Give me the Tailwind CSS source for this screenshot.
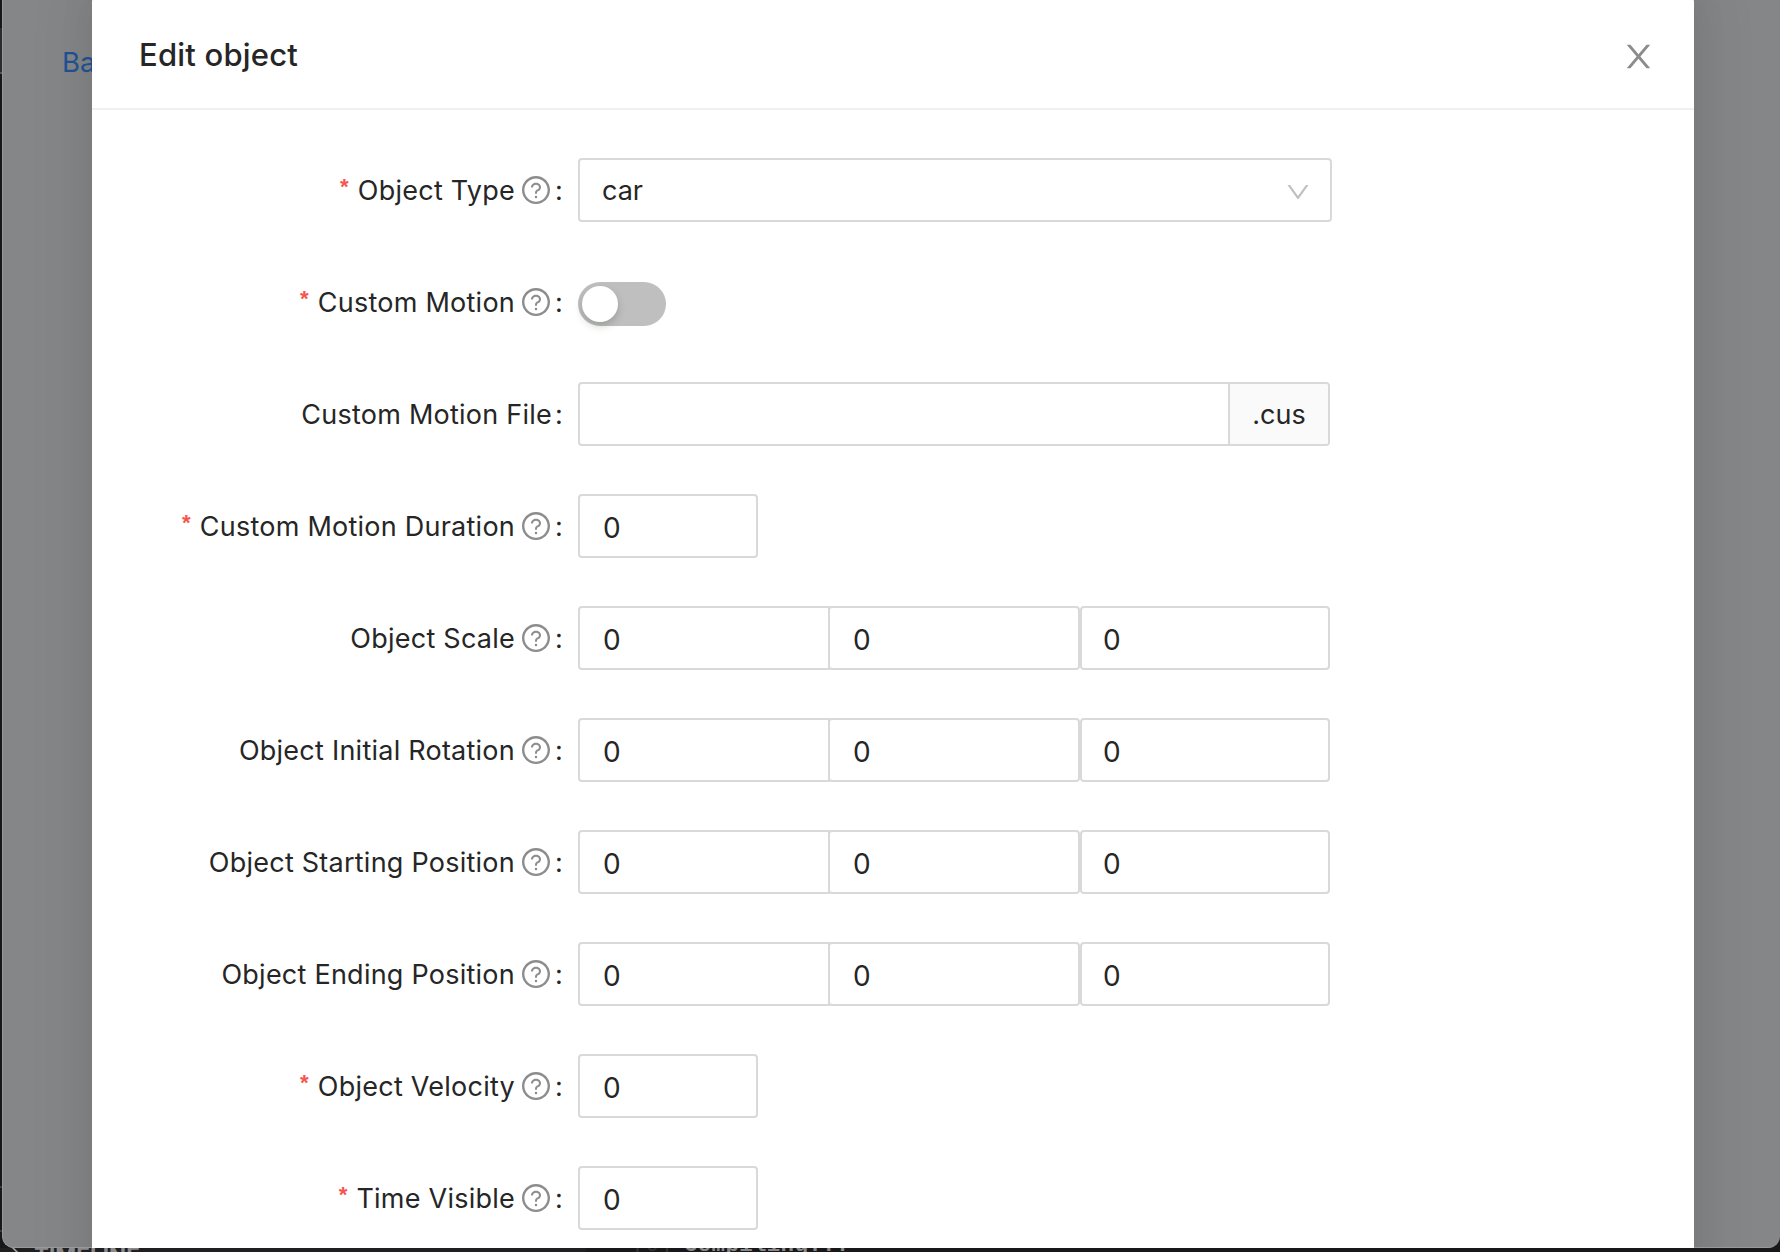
<!DOCTYPE html>
<html lang="en">
<head>
<meta charset="utf-8">
<title>Edit object</title>
<script src="https://cdn.jsdelivr.net/npm/@tailwindcss/browser@4"></script>
</head>
<body class="w-[1780px] h-[1252px] overflow-hidden bg-[#18181b] font-[Inter,sans-serif] text-[#262626] text-[27px]">
<svg class="hidden">
  <symbol id="help" viewBox="0 0 1024 1024"><path d="M512 64C264.6 64 64 264.6 64 512s200.6 448 448 448 448-200.6 448-448S759.4 64 512 64zm0 820c-205.4 0-372-166.6-372-372s166.6-372 372-372 372 166.6 372 372-166.6 372-372 372z"/><path d="M623.6 316.7C593.6 290.4 554 276 512 276s-81.6 14.5-111.6 40.7C369.2 344 352 380.7 352 420v7.6c0 4.4 3.6 8 8 8h48c4.4 0 8-3.6 8-8V420c0-44.1 43.1-80 96-80s96 35.9 96 80c0 31.1-22 59.6-56.1 72.7-21.2 8.1-39.2 22.3-52.1 40.9-13.1 19-19.9 41.8-19.9 64.9V620c0 4.4 3.6 8 8 8h48c4.4 0 8-3.6 8-8v-22.7a48.3 48.3 0 0130.9-44.8c59-22.7 97.1-74.7 97.1-132.5.1-39.3-17.1-76-48.3-103.3zM472 732a40 40 0 1080 0 40 40 0 10-80 0z"/></symbol>
</svg>
<div class="relative w-full h-full overflow-hidden">
  <!-- editor behind the window -->
  <div class="absolute left-0 top-[28px] w-[2px] h-[44px] bg-[#2b2c2f]"></div>
  <div class="absolute left-0 top-[72px] w-[2px] h-[2px] bg-[#55565a]"></div>
  <div class="absolute left-0 top-[1186px] w-[2px] h-[2px] bg-[#3c3c40]"></div>
  <div class="absolute left-0 top-[1230px] w-[2px] h-[2px] bg-[#3c3c40]"></div>
  <div class="absolute left-0 top-[1248px] w-[586px] h-1 bg-[#1f1f22]"></div>
  <div class="absolute left-[34px] top-[1244px] text-[22.5px] leading-[24px] font-bold text-[#8b8b8d] whitespace-nowrap">TIMELINE</div>
  <div class="absolute left-[632px] top-[1235px] font-[Liberation_Mono,monospace] text-[22.5px] leading-[20px] text-[#333] whitespace-nowrap">[0]</div>
  <div class="absolute left-[684px] top-[1235px] font-[Liberation_Mono,monospace] text-[22.5px] leading-[20px] tracking-[0.3px] font-bold text-[#888] whitespace-nowrap">Compiling...</div>
  <svg class="absolute left-[10px] top-[1243px] w-[10px] h-[12px]" viewBox="0 0 10 12" fill="none" stroke="#aaa" stroke-width="1.5"><path d="M1 3l7 7"/></svg>

  <!-- dimmed page -->
  <div class="absolute left-[2px] top-[-40px] w-[1778px] h-[1288px] rounded-b-[12px] bg-[#858687] overflow-hidden border-l border-b border-[#98999a]">
    <div class="absolute left-[59px] top-[85px] text-[27.5px] leading-[34px] text-[#1f5396]">Back</div>
    <div class="absolute left-[89px] top-[20px] w-[1602px] h-[1400px] shadow-[0_18px_56px_16px_rgba(0,0,0,0.05),0_12px_32px_rgba(0,0,0,0.08)]"></div>
  </div>

  <!-- dialog -->
  <div class="absolute left-[92px] top-[-2px] w-[1602px] h-[1250px] bg-white rounded-t-[4px] overflow-hidden">
    <div class="h-[112px] pt-[2px] pl-[47px] pr-[37px] flex items-center justify-between border-b-2 border-[#f0f0f0]">
      <h1 class="text-[31px] font-[550] leading-[44px] pt-[2px] tracking-[0.2px]">Edit object</h1>
      <svg class="w-[37px] h-[37px] mt-[4px]" viewBox="0 0 1024 1024" fill="#8c8c8c"><path d="M563.8 512l262.5-312.9c4.4-5.2.7-13.1-6.1-13.1h-79.8c-4.7 0-9.2 2.1-12.3 5.7L511.6 449.8 295.1 191.7c-3-3.6-7.5-5.7-12.3-5.7H203c-6.8 0-10.5 7.9-6.1 13.1L459.4 512 196.9 824.9A7.95 7.95 0 00203 838h79.8c4.7 0 9.2-2.1 12.3-5.7l216.5-258.1 216.5 258.1c3 3.6 7.5 5.7 12.3 5.7h79.8c6.8 0 10.5-7.9 6.1-13.1L563.8 512z"/></svg>
    </div>
    <form id="form" class="pt-[48px] flex flex-col gap-[48px]"></form>
  </div>
</div>
<script>
  const rows = [
    ['Object Type', true, true, 'select'],
    ['Custom Motion', true, true, 'switch'],
    ['Custom Motion File', false, false, 'file'],
    ['Custom Motion Duration', true, true, 'single'],
    ['Object Scale', false, true, 'triple'],
    ['Object Initial Rotation', false, true, 'triple'],
    ['Object Starting Position', false, true, 'triple'],
    ['Object Ending Position', false, true, 'triple'],
    ['Object Velocity', true, true, 'single'],
    ['Time Visible', true, true, 'single'],
  ];
  const box = (w, extra = 'pl-[23px]') => `<div class="${w} ${extra} h-16 shrink-0 border-2 border-[#d9d9d9] rounded-[4px] pt-[3px] text-[28px] flex items-center">0</div>`;
  const control = {
    select: `<div class="w-[754px] h-16 border-2 border-[#d9d9d9] rounded-[4px] pl-[22px] pr-[18px] flex items-center justify-between"><span class="pt-[2px]">car</span><svg class="w-7 h-7 mt-[4px]" viewBox="0 0 1024 1024" fill="#bfbfbf"><path d="M884 256h-75c-5.1 0-9.9 2.5-12.9 6.6L512 654.2 227.9 262.6c-3-4.1-7.8-6.6-12.9-6.6h-75c-6.5 0-10.3 7.4-6.5 12.7l352.6 486.1c12.8 17.6 39 17.6 51.7 0l352.6-486.1c3.9-5.3.1-12.7-6.4-12.7z"/></svg></div>`,
    switch: `<div class="w-[88px] h-11 mt-[4px] rounded-full bg-[#bfbfbf] p-1"><div class="w-9 h-9 rounded-full bg-white shadow-[0_4px_8px_rgba(0,35,11,0.2)]"></div></div>`,
    file: `<div class="w-[752px] h-16 border-2 border-[#d9d9d9] rounded-[4px] flex overflow-hidden"><div class="flex-1"></div><div class="w-[100px] border-l-2 border-[#d9d9d9] bg-[#fafafa] pt-[2px] flex items-center justify-center">.cus</div></div>`,
    single: box('w-[180px]'),
    triple: box('w-[252px]', 'pl-[23px] rounded-r-none') + box('w-[252px]', 'pl-[23px] -ml-[2px]') + box('w-[250px]', 'pl-[21px]'),
  };
  document.getElementById('form').innerHTML = rows.map(([label, req, help, kind]) => `
    <div class="h-16 flex items-center">
      <div class="w-[486px] h-16 pr-[14px] shrink-0 flex items-center justify-end">
        ${req ? '<span class="text-[#f5554f] font-[Liberation_Mono,monospace] font-bold text-[22px] w-[14px] mr-[6px] leading-none">*</span>' : ''}
        <span class="tracking-[0.24px] whitespace-nowrap pt-[2px]">${label}</span>
        ${help ? '<svg class="w-8 h-8 ml-[5px]" fill="#8c8c8c"><use href="#help"/></svg>' : ''}
        <span class="w-[10px] text-center ml-[2px] pt-[2px]">:</span>
      </div>
      ${control[kind]}
    </div>`).join('');
</script>
</body>
</html>
